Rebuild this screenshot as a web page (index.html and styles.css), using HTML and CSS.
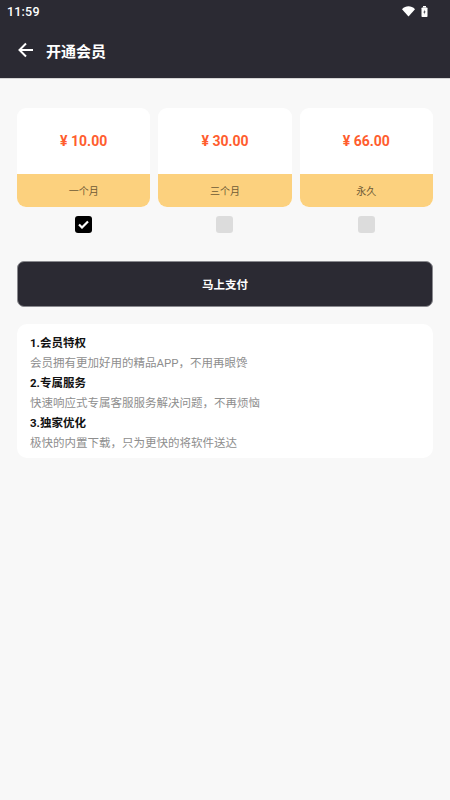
FILE: index.html
```html
<!DOCTYPE html>
<html lang="zh">
<head>
<meta charset="utf-8">
<link rel="stylesheet" href="styles.css">
</head>
<body>
<div class="top">
  <div class="status">
    <span class="time">11:59</span>
    <span class="sicons">
      <svg width="13" height="11" viewBox="0 0 13 11"><path d="M0 3.2 C3.8 -0.6 9.2 -0.6 13 3.2 L6.5 10.5 Z" fill="#fff"/></svg>
      <svg width="7" height="11" viewBox="0 0 7 11"><rect x="2" y="0" width="3" height="1.5" fill="#fff"/><rect x="0.5" y="1.5" width="6" height="9.5" rx="0.8" fill="#fff"/><path d="M3.8 3.5 L2.4 6.6 H3.5 L3.1 8.8 L4.6 5.6 H3.5 Z" fill="#2b2a33"/></svg>
    </span>
  </div>
  <div class="toolbar">
    <svg class="back" width="16" height="16" viewBox="0 0 16 16"><path d="M15 8 H2 M8 1.5 L1.5 8 L8 14.5" stroke="#fff" stroke-width="2" fill="none"/></svg>
    <span class="title">开通会员</span>
  </div>
</div>
<main class="content">
  <div class="plans">
    <div class="plan">
      <div class="card"><div class="price">¥ 10.00</div><div class="label">一个月</div></div>
      <div class="check on"><svg width="11" height="9" viewBox="0 0 11 9"><path d="M1 4.5 L4 7.5 L10 1.5" stroke="#fff" stroke-width="2.2" fill="none"/></svg></div>
    </div>
    <div class="plan">
      <div class="card"><div class="price">¥ 30.00</div><div class="label">三个月</div></div>
      <div class="check"></div>
    </div>
    <div class="plan">
      <div class="card"><div class="price">¥ 66.00</div><div class="label">永久</div></div>
      <div class="check"></div>
    </div>
  </div>
  <button class="pay">马上支付</button>
  <div class="info">
    <div class="h">1.会员特权</div>
    <div class="d">会员拥有更加好用的精品APP，不用再眼馋</div>
    <div class="h">2.专属服务</div>
    <div class="d">快速响应式专属客服服务解决问题，不再烦恼</div>
    <div class="h">3.独家优化</div>
    <div class="d">极快的内置下载，只为更快的将软件送达</div>
  </div>
</main>
</body>
</html>
```

FILE: styles.css
```css
* { box-sizing: border-box; }
html, body { margin: 0; padding: 0; }
body {
  width: 450px;
  height: 800px;
  background: #f8f8f8;
  font-family: Roboto, "Noto Sans CJK SC", sans-serif;
}
.top { background: #2b2a33; border-bottom: 1px solid #d4d4d4; }
.status {
  height: 22px;
  display: flex;
  align-items: center;
  justify-content: space-between;
  padding: 0 22px 0 7px;
}
.time { color: #fff; font-size: 12.5px; font-weight: 500; letter-spacing: 0.2px; }
.sicons { display: flex; align-items: center; gap: 6px; }
.toolbar {
  height: 56px;
  display: flex;
  align-items: center;
  padding-left: 18px;
}
.back { margin-right: 12px; }
.title { color: #fff; font-size: 15px; font-weight: 700; }
.content { padding: 29px 17px 0; }
.plans { display: flex; gap: 8px; }
.plan { flex: 1; display: flex; flex-direction: column; align-items: center; }
.card {
  width: 100%;
  border-radius: 9px;
  overflow: hidden;
  background: #fff;
}
.price {
  height: 66px;
  display: flex;
  align-items: center;
  justify-content: center;
  color: #ff5d2e;
  font-size: 14px;
  font-weight: 700;
}
.label {
  height: 33px;
  background: #fcd17e;
  display: flex;
  align-items: center;
  justify-content: center;
  color: #6e5a36;
  font-size: 10px;
}
.check {
  margin-top: 9px;
  width: 17px;
  height: 17px;
  border-radius: 3px;
  background: #dcdcdc;
  display: flex;
  align-items: center;
  justify-content: center;
}
.check.on { background: #000; }
.pay {
  margin-top: 28px;
  width: 100%;
  height: 46px;
  border: 1px solid #8a8a8f;
  border-radius: 7px;
  background: #2b2a33;
  color: #fff;
  font-family: inherit;
  font-size: 11.5px;
  font-weight: 700;
  display: block;
}
.info {
  margin-top: 17px;
  background: #fff;
  border-radius: 10px;
  padding: 9px 13px 5px;
}
.h { font-size: 11.5px; font-weight: 700; color: #111; line-height: 20px; }
.d { font-size: 11.5px; color: #8e8e8e; line-height: 20px; }
```
